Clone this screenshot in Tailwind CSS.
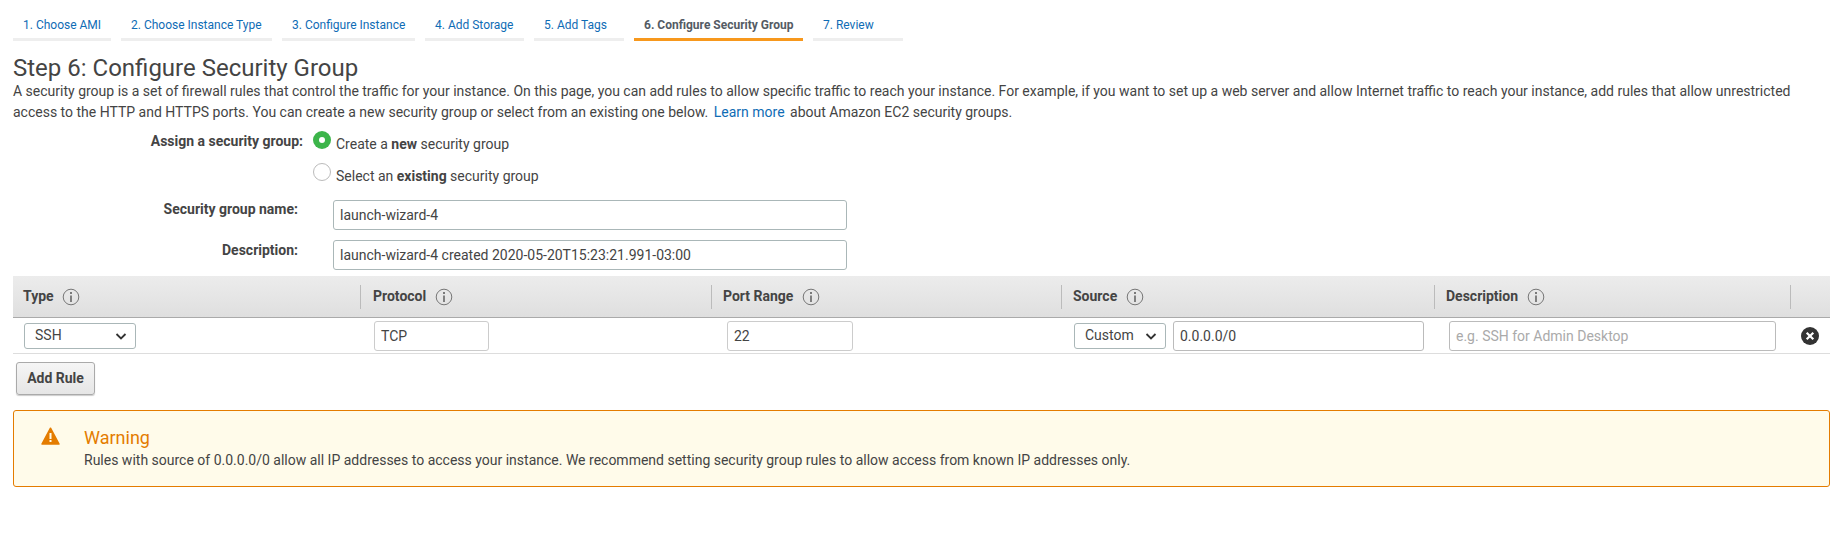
<!DOCTYPE html>
<html><head><meta charset="utf-8"><script src="https://cdn.jsdelivr.net/npm/@tailwindcss/browser@4"></script></head>
<body class="bg-white font-['Roboto',sans-serif] text-[14px] text-[#444] h-[537px] overflow-hidden">
<nav class="flex gap-[10px] pl-[13px] pt-[15px] h-[41px] text-[12px] text-[#0f6cb5] leading-[20px]">
 <a class="w-[98px] pl-[10px] border-b-[3px] border-[#eee]">1. Choose AMI</a>
 <a class="w-[151px] pl-[10px] border-b-[3px] border-[#eee]">2. Choose Instance Type</a>
 <a class="w-[133px] pl-[10px] border-b-[3px] border-[#eee]">3. Configure Instance</a>
 <a class="w-[99px] pl-[10px] border-b-[3px] border-[#eee]">4. Add Storage</a>
 <a class="w-[90px] pl-[10px] border-b-[3px] border-[#eee]">5. Add Tags</a>
 <a class="w-[169px] pl-[10px] border-b-[3px] border-[#f7981d] font-bold text-[#545b64]">6. Configure Security Group</a>
 <a class="w-[90px] pl-[10px] border-b-[3px] border-[#eee]">7. Review</a>
</nav>
<main class="pl-[13px] pr-[14px]">
 <h1 class="mt-[12px] text-[24px] leading-[30px] font-normal text-[#444]">Step 6: Configure Security Group</h1>
 <p class="leading-[21px] -mt-[2px]">A security group is a set of firewall rules that control the traffic for your instance. On this page, you can add rules to allow specific traffic to reach your instance. For example, if you want to set up a web server and allow Internet traffic to reach your instance, add rules that allow unrestricted access to the HTTP and HTTPS ports. You can create a new security group or select from an existing one below. <a class="text-[#0f6cb5] mx-[2px]">Learn more</a> about Amazon EC2 security groups.</p>
 <div class="grid grid-cols-[290px_1fr] mt-[8px] w-[840px]">
  <div class="font-bold text-right leading-[20px]">Assign a security group:</div>
  <div class="pl-[10px] flex flex-col gap-[12px]">
   <div class="flex gap-[5px] h-[20px]"><span class="w-[18px] h-[18px] rounded-full bg-[#3cb54a] flex items-center justify-center shrink-0"><span class="w-[6px] h-[6px] rounded-full bg-white"></span></span><span class="mt-[3px] leading-[20px]">Create a <b>new</b> security group</span></div>
   <div class="flex gap-[5px] h-[20px]"><span class="w-[18px] h-[18px] rounded-full border border-[#bbb] bg-white shrink-0"></span><span class="mt-[3px] leading-[20px]">Select an <b>existing</b> security group</span></div>
  </div>
 </div>
 <div class="grid grid-cols-[285px_514px] gap-x-[35px] gap-y-[10px] mt-[17px]">
  <div class="font-bold text-right leading-[20px] -mt-[1px]">Security group name:</div>
  <div class="h-[30px] border border-[#aab7b8] rounded-[3px] pl-[6px] leading-[28px]">launch-wizard-4</div>
  <div class="font-bold text-right leading-[20px]">Description:</div>
  <div class="h-[30px] border border-[#aab7b8] rounded-[3px] pl-[6px] leading-[28px]">launch-wizard-4 created 2020-05-20T15:23:21.991-03:00</div>
 </div>
 <div class="mt-[6px] grid grid-cols-[347px_351px_350px_373px_356px_40px] h-[42px] bg-gradient-to-b from-[#ececec] to-[#dfdfdf] border-b border-[#aaa] items-center font-bold text-[14px]">
  <div class="pl-[10px] flex items-center gap-[8px] h-[24px]">Type <svg class="w-[18px] h-[18px]" viewBox="0 0 18 18"><circle cx="9" cy="9" r="7.8" fill="none" stroke="#777"/><circle cx="9" cy="5" r="1" fill="#555"/><path d="M9 7.5v6.5" stroke="#555" stroke-width="1.4"/></svg></div>
  <div class="pl-[12px] flex items-center gap-[9px] h-[24px] border-l border-[#bbb]">Protocol <svg class="w-[18px] h-[18px]" viewBox="0 0 18 18"><circle cx="9" cy="9" r="7.8" fill="none" stroke="#777"/><circle cx="9" cy="5" r="1" fill="#555"/><path d="M9 7.5v6.5" stroke="#555" stroke-width="1.4"/></svg></div>
  <div class="pl-[11px] flex items-center gap-[9px] h-[24px] border-l border-[#bbb]">Port Range <svg class="w-[18px] h-[18px]" viewBox="0 0 18 18"><circle cx="9" cy="9" r="7.8" fill="none" stroke="#777"/><circle cx="9" cy="5" r="1" fill="#555"/><path d="M9 7.5v6.5" stroke="#555" stroke-width="1.4"/></svg></div>
  <div class="pl-[11px] flex items-center gap-[9px] h-[24px] border-l border-[#bbb]">Source <svg class="w-[18px] h-[18px]" viewBox="0 0 18 18"><circle cx="9" cy="9" r="7.8" fill="none" stroke="#777"/><circle cx="9" cy="5" r="1" fill="#555"/><path d="M9 7.5v6.5" stroke="#555" stroke-width="1.4"/></svg></div>
  <div class="pl-[11px] flex items-center gap-[9px] h-[24px] border-l border-[#bbb]">Description <svg class="w-[18px] h-[18px]" viewBox="0 0 18 18"><circle cx="9" cy="9" r="7.8" fill="none" stroke="#777"/><circle cx="9" cy="5" r="1" fill="#555"/><path d="M9 7.5v6.5" stroke="#555" stroke-width="1.4"/></svg></div>
  <div class="h-[24px] border-l border-[#bbb]"></div>
 </div>
 <div class="grid grid-cols-[347px_351px_350px_373px_356px_40px] h-[36px] border-b border-[#ddd] items-center text-[14px]">
  <div class="pl-[11px]"><div class="w-[112px] h-[26px] border border-[#aab7b8] rounded-[3px] pl-[10px] pr-[8px] flex items-center justify-between"><span>SSH</span><svg class="w-[12px] h-[12px]" viewBox="0 0 12 12"><path d="M1.5 4l4.5 4.5 4.5-4.5" fill="none" stroke="#333" stroke-width="1.8"/></svg></div></div>
  <div class="pl-[14px]"><div class="w-[115px] h-[30px] border border-[#ccc] rounded-[3px] pl-[6px] leading-[28px]">TCP</div></div>
  <div class="pl-[16px]"><div class="w-[126px] h-[30px] border border-[#ccc] rounded-[3px] pl-[6px] leading-[28px]">22</div></div>
  <div class="pl-[13px] flex items-center gap-[7px]"><div class="w-[92px] h-[26px] border border-[#aab7b8] rounded-[3px] pl-[10px] pr-[8px] flex items-center justify-between"><span>Custom</span><svg class="w-[12px] h-[12px]" viewBox="0 0 12 12"><path d="M1.5 4l4.5 4.5 4.5-4.5" fill="none" stroke="#333" stroke-width="1.8"/></svg></div><div class="w-[251px] h-[30px] border border-[#bbb] rounded-[3px] pl-[6px] leading-[28px]">0.0.0.0/0</div></div>
  <div class="pl-[15px]"><div class="w-[327px] h-[30px] border border-[#bbb] rounded-[3px] pl-[6px] leading-[28px] text-[#aaa]">e.g. SSH for Admin Desktop</div></div>
  <div class="pl-[11px]"><svg class="w-[18px] h-[18px]" viewBox="0 0 18 18"><circle cx="9" cy="9" r="9" fill="#333"/><path d="M5.7 5.7l6.6 6.6M12.3 5.7l-6.6 6.6" stroke="#fff" stroke-width="2.2"/></svg></div>
 </div>
 <button class="mt-[8px] ml-[3px] w-[79px] h-[33px] block border border-[#aaa] rounded-[3px] bg-gradient-to-b from-[#f5f5f5] to-[#e6e6e6] font-bold text-[14px] text-[#444] shadow-[0_1px_1px_#ccc]">Add Rule</button>
 <div class="mt-[15px] h-[77px] border border-[#e47c00] rounded-[3px] bg-[#fffbea] flex">
  <svg class="ml-[27px] mt-[16px] w-[19px] h-[18px] shrink-0" viewBox="0 0 19 18"><path d="M9.5 1.2L18 17H1Z" fill="#e47c00" stroke="#e47c00" stroke-linejoin="round" stroke-width="1.5"/><rect x="8.5" y="6" width="2" height="6" fill="#fffbea"/><rect x="8.5" y="13" width="2" height="2" fill="#fffbea"/></svg>
  <div class="ml-[24px] mt-[16px]"><div class="text-[18px] leading-[22px] font-normal text-[#e47c00]">Warning</div><div class="leading-[20px] mt-[1px]">Rules with source of 0.0.0.0/0 allow all IP addresses to access your instance. We recommend setting security group rules to allow access from known IP addresses only.</div></div>
 </div>
</main>
</body></html>
